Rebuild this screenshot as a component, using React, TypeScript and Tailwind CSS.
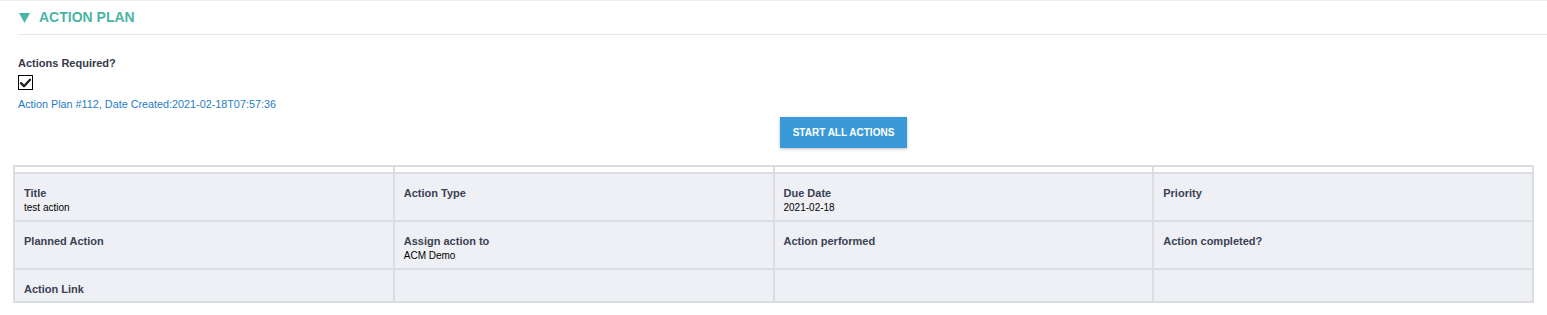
const rows = [
  [
    { label: "Title", value: "test action" },
    { label: "Action Type", value: "" },
    { label: "Due Date", value: "2021-02-18" },
    { label: "Priority", value: "" },
  ],
  [
    { label: "Planned Action", value: "" },
    { label: "Assign action to", value: "ACM Demo" },
    { label: "Action performed", value: "" },
    { label: "Action completed?", value: "" },
  ],
  [
    { label: "Action Link", value: "" },
    { label: "", value: "" },
    { label: "", value: "" },
    { label: "", value: "" },
  ],
];

const App = () => {
  return (
    <div
      className="w-[1547px] h-[315px] bg-white border-t border-[#eeeeee] overflow-hidden"
      style={{ fontFamily: '"Liberation Sans", Arial, sans-serif' }}
    >
      <div className="ml-[18px] h-[34px] flex items-center gap-[9px] border-b border-[#e8e8e8]">
        <svg width="11" height="10" viewBox="0 0 11 10" className="ml-[1px]">
          <path d="M0 0 H11 L5.5 10 Z" fill="#4bb5a4" />
        </svg>
        <span className="text-[14px] font-bold text-[#4bb5a4]">ACTION PLAN</span>
      </div>

      <div className="pl-[18px] pt-[21px]">
        <div className="text-[11px] font-bold text-[#333a48] leading-[14px]">
          Actions Required?
        </div>
        <div className="mt-[5px] w-[15px] h-[15px] border border-black flex items-center justify-center">
          <svg width="11" height="10" viewBox="0 0 11 10">
            <path
              d="M1 5.2 L4 8.2 L10 1.8"
              fill="none"
              stroke="#222"
              strokeWidth="2.4"
              strokeLinecap="round"
              strokeLinejoin="round"
            />
          </svg>
        </div>
        <div className="mt-[7px] text-[10.8px] leading-[14px] text-[#1e7cc5]">
          Action Plan #112, Date Created:2021-02-18T07:57:36
        </div>
      </div>

      <div className="ml-[780px] mt-[6px] w-[127px] h-[31px] bg-[#3a9ad9] shadow-[0_1px_3px_rgba(0,0,0,0.25)] flex items-center justify-center">
        <span className="text-[10px] font-bold text-white">START ALL ACTIONS</span>
      </div>

      <div className="ml-[13px] mt-[17px] w-[1521px]">
        <table className="w-full table-fixed border-collapse border-2 border-[#dcdde0]">
          <tbody>
            <tr className="h-[7px] bg-white">
              {[0, 1, 2, 3].map((i) => (
                <td key={i} className="border-2 border-[#dcdde0] p-0"></td>
              ))}
            </tr>
            {rows.map((row, r) => (
              <tr
                key={r}
                className={r === 2 ? "h-[33px] bg-[#eff0f5]" : "h-[48px] bg-[#eff0f5]"}
              >
                {row.map((cell, c) => (
                  <td
                    key={c}
                    className="border-2 border-[#dcdde0] align-top pl-[9px] pt-[11px]"
                  >
                    {cell.label && (
                      <div className="text-[11px] font-bold text-[#3a4254] leading-[16px]">
                        {cell.label}
                      </div>
                    )}
                    {cell.value && (
                      <div className="text-[10px] text-black leading-[13px]">
                        {cell.value}
                      </div>
                    )}
                  </td>
                ))}
              </tr>
            ))}
          </tbody>
        </table>
      </div>
    </div>
  );
};

export default App;
